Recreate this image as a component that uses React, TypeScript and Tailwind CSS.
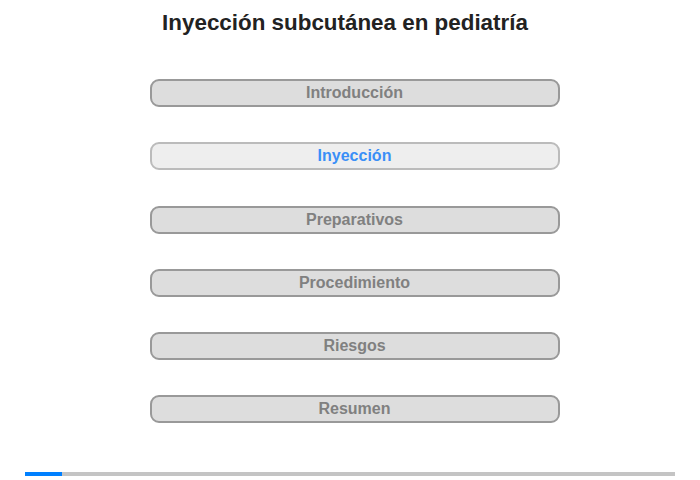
const sections = [
  'Introducción',
  'Inyección',
  'Preparativos',
  'Procedimiento',
  'Riesgos',
  'Resumen'
];

const activeIndex = 1;

export default function App() {
  return (
    <div
      className="w-[700px] h-[480px] bg-white flex flex-col items-center"
      style={{ fontFamily: '"Liberation Sans", Arial, sans-serif' }}
    >
      <h1 className="mt-[10px] h-[26px] leading-[26px] text-[22.4px] font-bold text-[#222222] mr-[10px]">
        Inyección subcutánea en pediatría
      </h1>

      <div className="mt-[43px] ml-[9px] flex flex-col gap-[35.3px]">
        {sections.map((label, idx) => {
          const active = idx === activeIndex;
          return (
            <button
              key={idx}
              className={`w-[410px] h-[28px] rounded-[9px] border-2 flex items-center justify-center text-[16px] font-bold leading-none ${
                active
                  ? 'bg-[#eeeeee] border-[#bbbbbb] text-[#3a8ff7]'
                  : 'bg-[#dddddd] border-[#999999] text-[#808080]'
              }`}
            >
              {label}
            </button>
          );
        })}
      </div>

      <div className="mt-auto mb-[4px] w-[650px] h-[4px] bg-[#c4c4c4] flex">
        <div className="w-[37px] h-full bg-[#0080ff]" />
      </div>
    </div>
  );
}
